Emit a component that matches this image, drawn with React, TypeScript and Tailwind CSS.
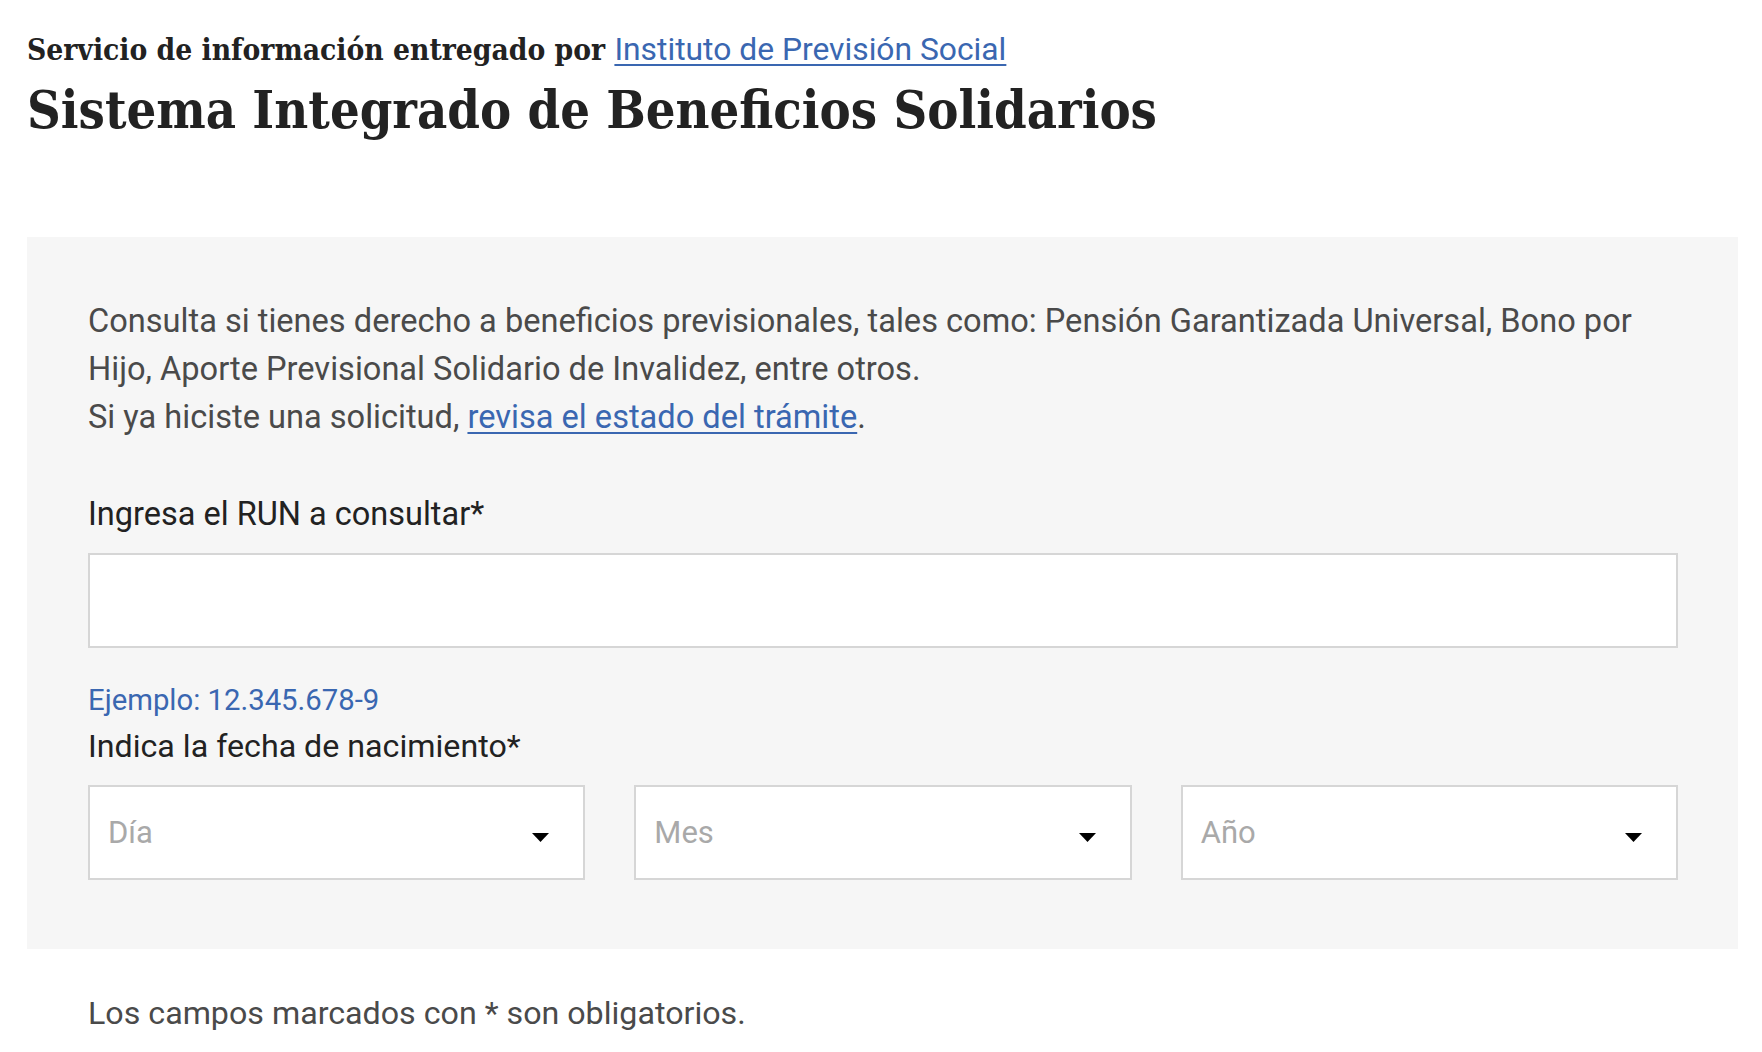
import React from "react";

function Caret() {
  return (
    <svg width="17" height="9" viewBox="0 0 17 9" className="shrink-0">
      <path d="M0 0 L17 0 L8.5 9 Z" fill="#000" />
    </svg>
  );
}

function SelectBox({ label }: { label: string }) {
  return (
    <div className="flex h-[95px] flex-1 items-center justify-between border-2 border-[#d6d6d6] bg-white pl-[18px] pr-[34px]">
      <span className="text-[31px] leading-[40px] text-[#a9a9a9]">{label}</span>
      <div className="pt-[10px]">
        <Caret />
      </div>
    </div>
  );
}

export default function App() {
  return (
    <div className="min-h-screen bg-white pl-[27px] pr-[24px] pt-[31px] pb-[30px] font-['Roboto',sans-serif]">
      <p className="font-['DejaVu_Serif_Condensed','DejaVu_Serif',serif] font-stretch-condensed text-[29.7px] font-bold leading-[36px] text-[#222]">
        Servicio de información entregado por{" "}
        <a
          href="#"
          className="font-['Roboto',sans-serif] font-stretch-normal text-[31.8px] font-normal text-[#3a67b1] underline decoration-2 underline-offset-[4px]"
        >
          Instituto de Previsión Social
        </a>
      </p>
      <h1 className="mt-[10px] font-['DejaVu_Serif_Condensed','DejaVu_Serif',serif] font-stretch-condensed text-[52px] font-bold leading-[64px] text-[#222]">
        Sistema Integrado de Beneficios Solidarios
      </h1>

      <div className="mt-[95px] bg-[#f6f6f6] pl-[61px] pr-[60px] pt-[60px] pb-[69px]">
        <p className="text-[32.6px] leading-[48px] text-[#4a4a4a]">
          Consulta si tienes derecho a beneficios previsionales, tales como: Pensión Garantizada Universal, Bono por
          <br />
          Hijo, Aporte Previsional Solidario de Invalidez, entre otros.
          <br />
          Si ya hiciste una solicitud,{" "}
          <a href="#" className="text-[#3a67b1] underline decoration-2 underline-offset-[4px]">
            revisa el estado del trámite
          </a>
          .
        </p>

        <label className="mt-[53px] block text-[32.5px] leading-[40px] text-[#222]">Ingresa el RUN a consultar*</label>
        <input
          type="text"
          className="mt-[19px] block h-[95px] w-full border-2 border-[#d6d6d6] bg-white px-[18px] text-[30px] outline-none"
        />
        <p className="mt-[35px] text-[29.3px] leading-[34px] text-[#3a67b1]">Ejemplo: 12.345.678-9</p>
        <p className="mt-[9px] text-[32.2px] leading-[40px] text-[#222]">Indica la fecha de nacimiento*</p>

        <div className="mt-[19px] flex gap-[49px]">
          <SelectBox label="Día" />
          <SelectBox label="Mes" />
          <SelectBox label="Año" />
        </div>
      </div>

      <p className="ml-[61px] mt-[44px] text-[32.2px] leading-[40px] text-[#4a4a4a]">
        Los campos marcados con * son obligatorios.
      </p>
    </div>
  );
}
